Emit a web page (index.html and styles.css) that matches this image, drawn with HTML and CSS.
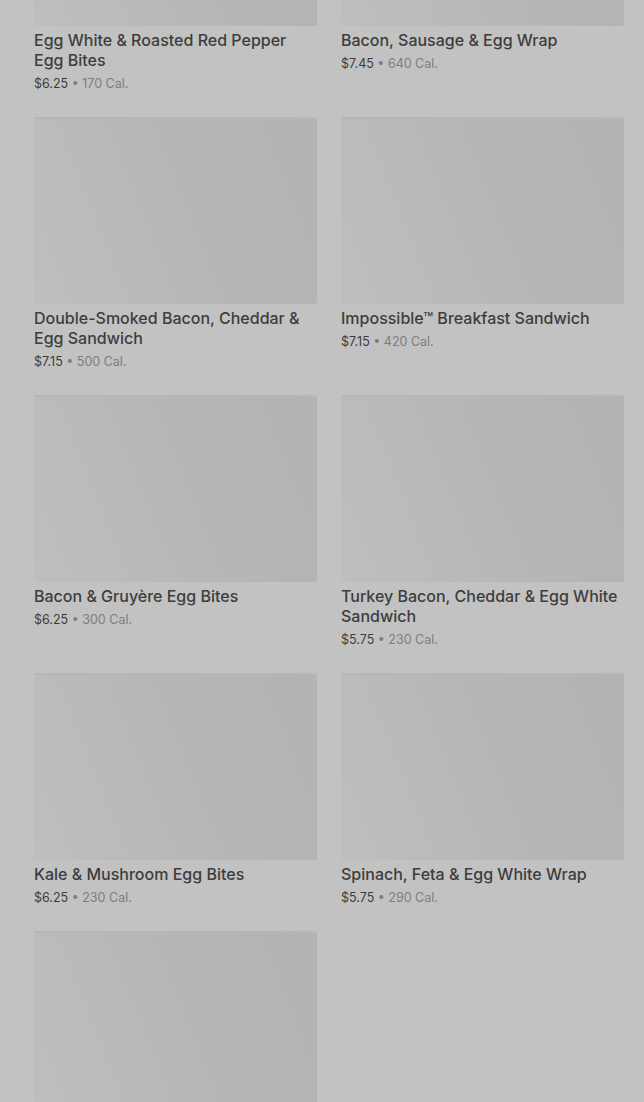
FILE: index.html
```html
<!DOCTYPE html>
<html lang="en">

<head>
    <meta charset="UTF-8">
    <meta name="viewport" content="width=device-width, initial-scale=1.0">
    <title>Hot Breakfast</title>
    <link rel="stylesheet" href="styles.css">
</head>

<body>
    <div class="menu">
        <div class="grid">
            <div class="card">
                <div class="thumb"></div>
                <h3 class="name">Egg White &amp; Roasted Red Pepper Egg Bites</h3>
                <p class="meta"><span class="price">$6.25</span> • 170 Cal.</p>
            </div>
            <div class="card">
                <div class="thumb"></div>
                <h3 class="name">Bacon, Sausage &amp; Egg Wrap</h3>
                <p class="meta"><span class="price">$7.45</span> • 640 Cal.</p>
            </div>
            <div class="card">
                <div class="thumb"></div>
                <h3 class="name">Double-Smoked Bacon, Cheddar &amp; Egg Sandwich</h3>
                <p class="meta"><span class="price">$7.15</span> • 500 Cal.</p>
            </div>
            <div class="card">
                <div class="thumb"></div>
                <h3 class="name">Impossible™ Breakfast Sandwich</h3>
                <p class="meta"><span class="price">$7.15</span> • 420 Cal.</p>
            </div>
            <div class="card">
                <div class="thumb"></div>
                <h3 class="name">Bacon &amp; Gruyère Egg Bites</h3>
                <p class="meta"><span class="price">$6.25</span> • 300 Cal.</p>
            </div>
            <div class="card">
                <div class="thumb"></div>
                <h3 class="name">Turkey Bacon, Cheddar &amp; Egg White Sandwich</h3>
                <p class="meta"><span class="price">$5.75</span> • 230 Cal.</p>
            </div>
            <div class="card">
                <div class="thumb"></div>
                <h3 class="name">Kale &amp; Mushroom Egg Bites</h3>
                <p class="meta"><span class="price">$6.25</span> • 230 Cal.</p>
            </div>
            <div class="card">
                <div class="thumb"></div>
                <h3 class="name">Spinach, Feta &amp; Egg White Wrap</h3>
                <p class="meta"><span class="price">$5.75</span> • 290 Cal.</p>
            </div>
            <div class="card">
                <div class="thumb"></div>
            </div>
        </div>
    </div>
</body>

</html>
```

FILE: styles.css
```css
* {
    box-sizing: border-box;
}

body,
html {
    margin: 0;
    overflow: hidden;
    background-color: #c2c2c2;
    font-family: Inter, "Noto Sans", sans-serif;
}

.menu {
    padding: 0 20px 0 34px;
    margin-top: -161px;
}

.grid {
    display: grid;
    grid-template-columns: 1fr 1fr;
    column-gap: 24px;
}

.card {
    padding-bottom: 23px;
}

.thumb {
    height: 187px;
    border-radius: 2px;
    border-top: 2px solid #b6b6b6;
    background: linear-gradient(68deg, #bebebe 0%, #bababa 30%, #b6b6b6 55%, #b3b3b3 100%);
}

.name {
    margin: 4px 0 0;
    font-size: 16px;
    font-weight: 500;
    line-height: 20px;
    color: #3d3d3d;
}

.meta {
    margin: 4px 0 0;
    font-size: 12.5px;
    line-height: 20px;
    color: #7d7d7d;
}

.meta .price {
    color: #3d3d3d;
}
```
